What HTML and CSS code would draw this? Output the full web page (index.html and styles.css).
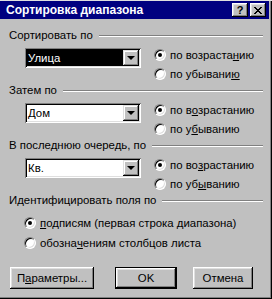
FILE: index.html
```html
<!DOCTYPE html>
<html lang="ru">
  <head>
    <meta charset="UTF-8" />
    <title>Сортировка диапазона</title>
    <link rel="stylesheet" href="styles.css">
  </head>
  <body>
    <div class="dialog">
      <div class="titlebar">
        <span class="title">Сортировка диапазона</span>
        <span class="cap-btn help">?</span>
        <span class="cap-btn close">
          <svg width="8" height="7" viewBox="0 0 8 7" shape-rendering="crispEdges">
            <path d="M0 0h2v1H0zM6 0h2v1H6zM1 1h2v1H1zM5 1h2v1H5zM2 2h4v1H2zM3 3h2v1H3zM2 4h4v1H2zM1 5h2v1H1zM5 5h2v1H5zM0 6h2v1H0zM6 6h2v1H6z" fill="#000"/>
          </svg>
        </span>
      </div>

      <div class="content">
        <div class="group">
          <div class="legend"><span>Сортировать по</span><span class="rule"></span></div>
          <div class="group-row">
            <div class="combo selected">
              <span class="combo-text">Улица</span>
              <span class="combo-btn"><span class="arrow"></span></span>
            </div>
            <div class="radios">
              <div class="option"><span class="radio checked"></span>по возраста<u>н</u>ию</div>
              <div class="option"><span class="radio"></span>по убывани<u>ю</u></div>
            </div>
          </div>
        </div>

        <div class="group">
          <div class="legend"><span>Затем по</span><span class="rule"></span></div>
          <div class="group-row">
            <div class="combo">
              <span class="combo-text">Дом</span>
              <span class="combo-btn"><span class="arrow"></span></span>
            </div>
            <div class="radios">
              <div class="option"><span class="radio checked"></span>по в<u>о</u>зрастанию</div>
              <div class="option"><span class="radio"></span>по у<u>б</u>ыванию</div>
            </div>
          </div>
        </div>

        <div class="group">
          <div class="legend"><span>В последнюю очередь, по</span><span class="rule"></span></div>
          <div class="group-row">
            <div class="combo">
              <span class="combo-text">Кв.</span>
              <span class="combo-btn"><span class="arrow"></span></span>
            </div>
            <div class="radios">
              <div class="option"><span class="radio checked"></span>по во<u>з</u>растанию</div>
              <div class="option"><span class="radio"></span>по уб<u>ы</u>ванию</div>
            </div>
          </div>
        </div>

        <div class="identify">
          <div class="legend"><span>Идентифицировать поля по</span><span class="rule"></span></div>
          <div class="id-options">
            <div class="option tall"><span class="radio checked"></span><u>п</u>одписям (первая строка диапазона)</div>
            <div class="option tall"><span class="radio"></span>обозна<u>ч</u>ениям столбцов листа</div>
          </div>
        </div>

        <div class="buttons">
          <span class="btn params">П<u>а</u>раметры...</span>
          <span class="btn ok default">OK</span>
          <span class="btn cancel">Отмена</span>
        </div>
      </div>
    </div>
  </body>
</html>
```

FILE: styles.css
```css
body
{
  margin: 0;
  font-family: "Liberation Sans", Arial, sans-serif;
  font-size: 11.4px;
  color: #000;
  background: #c0c0c0;
}
.dialog
{
  width: 272px;
  height: 299px;
  box-sizing: border-box;
  padding: 1px 3px 3px 0;
  background: #c0c0c0;
  box-shadow: inset 0 1px #dfdfdf, inset -1px -1px #000, inset -2px -2px #808080;
}
.titlebar
{
  height: 18px;
  display: flex;
  align-items: center;
  padding: 0 3px 0 6px;
  background: #000080;
  color: #fff;
}
.title
{
  flex: 1;
  font-weight: bold;
  font-size: 12px;
}
.cap-btn
{
  width: 16px;
  height: 14px;
  box-sizing: border-box;
  display: flex;
  align-items: center;
  justify-content: center;
  background: #c0c0c0;
  color: #000;
  font-weight: bold;
  font-size: 11px;
  box-shadow: inset -1px -1px #000, inset 1px 1px #fff, inset -2px -2px #808080, inset 2px 2px #dfdfdf;
}
.help
{
  margin-right: 2px;
}
.content
{
  padding: 10px 0 0 9px;
}
.legend
{
  display: flex;
  align-items: center;
  height: 13px;
  line-height: 13px;
  margin-right: 6px;
}
.rule
{
  flex: 1;
  height: 0;
  margin-left: 6px;
  border-top: 1px solid #808080;
  border-bottom: 1px solid #fff;
}
.group
{
  height: 55px;
}
.group-row
{
  display: flex;
  padding-left: 16px;
}
.combo
{
  margin-top: 6px;
  width: 116px;
  height: 20px;
  box-sizing: border-box;
  padding: 2px;
  display: flex;
  background: #fff;
  box-shadow: inset 1px 1px #808080, inset -1px -1px #fff, inset 2px 2px #000, inset -2px -2px #dfdfdf;
}
.combo-text
{
  flex: 1;
  padding-left: 1px;
  line-height: 16px;
}
.combo.selected .combo-text
{
  background: #000;
  color: #fff;
}
.combo-btn
{
  width: 16px;
  height: 16px;
  box-sizing: border-box;
  display: flex;
  align-items: center;
  justify-content: center;
  background: #c0c0c0;
  box-shadow: inset -1px -1px #000, inset 1px 1px #dfdfdf, inset -2px -2px #808080, inset 2px 2px #fff;
}
.arrow
{
  width: 0;
  height: 0;
  border-left: 4px solid transparent;
  border-right: 4px solid transparent;
  border-top: 4px solid #000;
}
.radios
{
  margin-top: 3px;
  margin-left: 13px;
}
.option
{
  display: flex;
  align-items: center;
  height: 19px;
  white-space: nowrap;
}
.option.tall
{
  height: 20px;
}
.radio
{
  width: 12px;
  height: 12px;
  box-sizing: border-box;
  margin-right: 4px;
  border-radius: 50%;
  border: 1px solid;
  border-color: #808080 #fff #fff #808080;
  background: #fff;
  box-shadow: inset 1px 1px #000, inset -1px -1px #dfdfdf;
  display: flex;
  align-items: center;
  justify-content: center;
  flex: none;
}
.radio.checked::after
{
  content: "";
  width: 4px;
  height: 4px;
  border-radius: 50%;
  background: #000;
}
.identify
{
  height: 59px;
}
.id-options
{
  margin-top: 6px;
  padding-left: 15px;
}
.buttons
{
  display: flex;
  margin-top: 14px;
  padding-left: 1px;
}
.btn
{
  height: 22px;
  box-sizing: border-box;
  display: flex;
  align-items: center;
  justify-content: center;
  background: #c0c0c0;
  box-shadow: inset -1px -1px #000, inset 1px 1px #fff, inset -2px -2px #808080, inset 2px 2px #dfdfdf;
}
.btn.default
{
  box-shadow: inset 0 0 0 1px #000, inset -2px -2px #000, inset 2px 2px #fff, inset -3px -3px #808080, inset 3px 3px #dfdfdf;
}
.params
{
  width: 84px;
}
.ok
{
  width: 62px;
  margin-left: 21px;
}
.cancel
{
  width: 60px;
  margin-left: 16px;
}
```
